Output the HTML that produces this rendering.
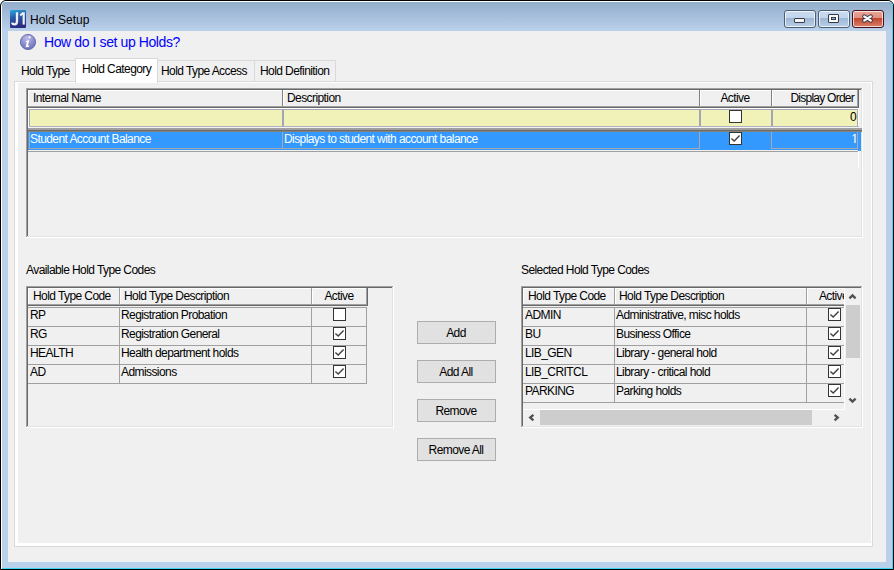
<!DOCTYPE html><html><head><meta charset="utf-8"><style>
html,body{margin:0;padding:0;width:894px;height:570px;overflow:hidden;background:#fff}
.a{position:absolute}
.t{font-family:"Liberation Sans",sans-serif;font-size:12px;line-height:14px;white-space:nowrap;color:#000}
</style></head><body>
<div class="a" style="left:0px;top:0px;width:894px;height:570px;box-sizing:border-box;border:1px solid #000;border-radius:6px 6px 0 0;background:#000"></div>
<div class="a" style="left:1px;top:1px;width:892px;height:568px;border-radius:5px 5px 0 0;background:#fff"></div>
<div class="a" style="left:2px;top:2px;width:891px;height:567px;border-radius:4px 4px 0 0;background:#3ed6f6"></div>
<div class="a" style="left:2px;top:2px;width:890px;height:566px;border-radius:4px 4px 0 0;background:linear-gradient(#93aeca 0px,#a6bedb 14px,#b9d1ea 29px,#b9d1ea 100%)"></div>
<div class="a" style="left:8px;top:31px;width:878px;height:531px;background:#f0f0f0"></div>
<svg class="a" style="left:10px;top:10px" width="16" height="18"><defs><linearGradient id="jg" x1="0" y1="0" x2="0.25" y2="1"><stop offset="0" stop-color="#27aae6"/><stop offset="0.45" stop-color="#2a5aa4"/><stop offset="1" stop-color="#2e2c82"/></linearGradient></defs><rect x="0" y="0" width="16" height="18" rx="1" fill="url(#jg)"/><path d="M7 2.2 L7 11 Q7 14.4 4.4 14.4 Q2.6 14.4 2 12.6" stroke="#eef0f8" stroke-width="2.3" fill="none"/><path d="M13.7 2.3 L13.7 14.6" stroke="#eef0f8" stroke-width="2.2" fill="none"/><path d="M13.4 2.8 L10.2 5.4" stroke="#eef0f8" stroke-width="2" fill="none"/></svg>
<div class="a t" style="left:30px;top:13px;font-size:12px;letter-spacing:0px;color:#000">Hold Setup</div>
<div class="a" style="left:784px;top:10px;width:32px;height:18px;box-sizing:border-box;border:1px solid #4f5d73;border-radius:3px;background:linear-gradient(#c9dbef 0,#c2d5eb 7px,#9cb6d3 7px,#b9cfe8 100%);box-shadow:inset 0 0 0 1px rgba(255,255,255,.7)"></div>
<div class="a" style="left:818px;top:10px;width:32px;height:18px;box-sizing:border-box;border:1px solid #4f5d73;border-radius:3px;background:linear-gradient(#c9dbef 0,#c2d5eb 7px,#9cb6d3 7px,#b9cfe8 100%);box-shadow:inset 0 0 0 1px rgba(255,255,255,.7)"></div>
<div class="a" style="left:852px;top:10px;width:32px;height:18px;box-sizing:border-box;border:1px solid #4a0f1a;border-radius:3px;background:linear-gradient(#e9a595 0,#e0917f 7px,#c2432a 7px,#d9806a 100%);box-shadow:inset 0 0 0 1px rgba(255,255,255,.7)"></div>
<div class="a" style="left:794px;top:18px;width:11px;height:5px;box-sizing:border-box;border:1px solid #343c4c;border-radius:1px;background:#f4f4f4"></div>
<div class="a" style="left:828px;top:14px;width:11px;height:9px;box-sizing:border-box;border:1px solid #343c4c;border-radius:1px;background:#f8f8f8"></div>
<div class="a" style="left:831px;top:17px;width:5px;height:3px;box-sizing:border-box;border:1px solid #343c4c;background:#9bb2cf"></div>
<svg class="a" style="left:860px;top:13px" width="15" height="11"><path d="M4.3 3.4 L10.7 7.6 M10.7 3.4 L4.3 7.6" stroke="#2d3444" stroke-width="4.2" stroke-linecap="round"/><path d="M4.3 3.4 L10.7 7.6 M10.7 3.4 L4.3 7.6" stroke="#f6f6f6" stroke-width="2.4" stroke-linecap="round"/></svg>
<svg class="a" style="left:20px;top:34px" width="16" height="16"><defs><radialGradient id="ig" cx="45%" cy="25%" r="75%"><stop offset="0" stop-color="#c4bdea"/><stop offset="0.6" stop-color="#8a8ccc"/><stop offset="1" stop-color="#6a70b8"/></radialGradient></defs><circle cx="8" cy="8" r="7.6" fill="url(#ig)" stroke="#5f66ad" stroke-width="0.9"/><circle cx="9.6" cy="3.3" r="1.15" fill="#fff"/><path d="M6.1 6.9 L9.3 6.1 L7.8 11.8 L9.4 11.5 L8.9 13.1 L5.5 13.2 L6.9 8.1 L5.8 8.2 Z" fill="#fff"/></svg>
<div class="a t" style="left:44px;top:35px;font-size:14px;letter-spacing:-0.4px;color:#0000ff">How do I set up Holds?</div>
<div class="a" style="left:14px;top:81px;width:859px;height:466px;box-sizing:border-box;border:1px solid #d9d9d9;background:#fff"></div>
<div class="a" style="left:18px;top:83px;width:853px;height:460px;background:#f0f0f0"></div>
<div class="a" style="left:16px;top:60px;width:60px;height:22px;box-sizing:border-box;border:1px solid #d9d9d9;background:#f0f0f0"></div>
<div class="a t" style="left:21px;top:64px;font-size:12px;letter-spacing:-0.58px;">Hold Type</div>
<div class="a" style="left:16px;top:61px;width:1px;height:20px;background:#f0f0f0"></div>
<div class="a" style="left:157px;top:60px;width:98px;height:22px;box-sizing:border-box;border:1px solid #d9d9d9;background:#f0f0f0"></div>
<div class="a t" style="left:161px;top:64px;font-size:12px;letter-spacing:-0.58px;">Hold Type Access</div>
<div class="a" style="left:254px;top:60px;width:82px;height:22px;box-sizing:border-box;border:1px solid #d9d9d9;background:#f0f0f0"></div>
<div class="a t" style="left:260px;top:64px;font-size:12px;letter-spacing:-0.58px;">Hold Definition</div>
<div class="a" style="left:75px;top:58px;width:83px;height:25px;box-sizing:border-box;border:1px solid #d9d9d9;border-bottom:none;background:#fff"></div>
<div class="a t" style="left:82px;top:62px;font-size:12px;letter-spacing:-0.58px;">Hold Category</div>
<div class="a" style="left:26px;top:88px;width:837px;height:150px;background:#f0f0f0"></div>
<div class="a" style="left:26px;top:88px;width:836px;height:1px;background:#a0a0a0"></div>
<div class="a" style="left:26px;top:88px;width:1px;height:149px;background:#a0a0a0"></div>
<div class="a" style="left:27px;top:89px;width:834px;height:1px;background:#696969"></div>
<div class="a" style="left:27px;top:89px;width:1px;height:147px;background:#696969"></div>
<div class="a" style="left:27px;top:236px;width:835px;height:1px;background:#e3e3e3"></div>
<div class="a" style="left:861px;top:89px;width:1px;height:148px;background:#e3e3e3"></div>
<div class="a" style="left:26px;top:237px;width:837px;height:1px;background:#fff"></div>
<div class="a" style="left:862px;top:88px;width:1px;height:150px;background:#fff"></div>
<div class="a" style="left:28px;top:90px;width:255px;height:18px;background:#f0f0f0"></div>
<div class="a" style="left:28px;top:90px;width:254px;height:1px;background:#fff"></div>
<div class="a" style="left:28px;top:90px;width:1px;height:16px;background:#fff"></div>
<div class="a" style="left:282px;top:90px;width:1px;height:18px;background:#808080"></div>
<div class="a" style="left:283px;top:90px;width:417px;height:18px;background:#f0f0f0"></div>
<div class="a" style="left:283px;top:90px;width:416px;height:1px;background:#fff"></div>
<div class="a" style="left:283px;top:90px;width:1px;height:16px;background:#fff"></div>
<div class="a" style="left:699px;top:90px;width:1px;height:18px;background:#808080"></div>
<div class="a" style="left:700px;top:90px;width:72px;height:18px;background:#f0f0f0"></div>
<div class="a" style="left:700px;top:90px;width:71px;height:1px;background:#fff"></div>
<div class="a" style="left:700px;top:90px;width:1px;height:16px;background:#fff"></div>
<div class="a" style="left:771px;top:90px;width:1px;height:18px;background:#808080"></div>
<div class="a" style="left:772px;top:90px;width:87px;height:18px;background:#f0f0f0"></div>
<div class="a" style="left:772px;top:90px;width:86px;height:1px;background:#fff"></div>
<div class="a" style="left:772px;top:90px;width:1px;height:16px;background:#fff"></div>
<div class="a" style="left:858px;top:90px;width:1px;height:18px;background:#808080"></div>
<div class="a" style="left:28px;top:106px;width:831px;height:1px;background:#a0a0a0"></div>
<div class="a" style="left:28px;top:107px;width:831px;height:1px;background:#696969"></div>
<div class="a" style="left:857px;top:90px;width:1px;height:17px;background:#a0a0a0"></div>
<div class="a" style="left:858px;top:89px;width:1px;height:19px;background:#696969"></div>
<div class="a t" style="left:33px;top:91px;font-size:12px;letter-spacing:-0.58px;">Internal Name</div>
<div class="a t" style="left:287px;top:91px;font-size:12px;letter-spacing:-0.58px;">Description</div>
<div class="a t" style="left:635px;width:200px;text-align:center;top:91px;font-size:12px;letter-spacing:-0.58px;">Active</div>
<div class="a t" style="right:40px;top:91px;font-size:12px;letter-spacing:-0.75px;">Display Order</div>
<div class="a" style="left:28px;top:108px;width:831px;height:1px;background:#fff"></div>
<div class="a" style="left:28px;top:108px;width:1px;height:20px;background:#fff"></div>
<div class="a" style="left:29px;top:109px;width:830px;height:17px;background:#f0f2b8"></div>
<div class="a" style="left:29px;top:109px;width:830px;height:1px;background:#a8a8b8"></div>
<div class="a" style="left:29px;top:109px;width:1px;height:17px;background:#a8a8b8"></div>
<div class="a" style="left:282px;top:109px;width:2px;height:17px;background:#a4a4b4"></div>
<div class="a" style="left:699px;top:109px;width:2px;height:17px;background:#a4a4b4"></div>
<div class="a" style="left:771px;top:109px;width:2px;height:17px;background:#a4a4b4"></div>
<div class="a" style="left:857px;top:109px;width:1px;height:17px;background:#a8a8b8"></div>
<div class="a" style="left:858px;top:108px;width:3px;height:20px;background:#f0f0f0"></div>
<div class="a" style="left:858px;top:108px;width:1px;height:20px;background:#fff"></div>
<div class="a" style="left:29px;top:126px;width:830px;height:1px;background:#b0b0c0"></div>
<div class="a" style="left:28px;top:127px;width:831px;height:1px;background:#f4f4f4"></div>
<div class="a" style="left:28px;top:128px;width:834px;height:1px;background:#a0a0a0"></div>
<div class="a" style="left:28px;top:129px;width:834px;height:1px;background:#a0a0a0"></div>
<div class="a" style="left:28px;top:130px;width:834px;height:1px;background:#6a6a6a"></div>
<div class="a" style="left:28px;top:131px;width:834px;height:1px;background:#8a8478"></div>
<div class="a" style="left:729px;top:110px;width:11px;height:11px;border:1px solid #333;background:#fff"></div>
<div class="a t" style="right:38px;top:110px;font-size:12px;letter-spacing:-0.58px;">0</div>
<div class="a" style="left:28px;top:132px;width:833px;height:19px;background:#3399ff"></div>
<div class="a" style="left:29px;top:148px;width:670px;height:1px;background:#a8a8b0"></div>
<div class="a" style="left:772px;top:148px;width:86px;height:1px;background:#a8a8b0"></div>
<div class="a" style="left:29px;top:132px;width:1px;height:17px;background:#a8a8b0"></div>
<div class="a" style="left:282px;top:132px;width:1px;height:17px;background:#a8a8b0"></div>
<div class="a" style="left:699px;top:132px;width:1px;height:17px;background:#a8a8b0"></div>
<div class="a" style="left:771px;top:132px;width:1px;height:17px;background:#a8a8b0"></div>
<div class="a" style="left:857px;top:132px;width:1px;height:17px;background:#a8a8b0"></div>
<div class="a" style="left:28px;top:150px;width:830px;height:1px;background:#f2eee8"></div>
<div class="a" style="left:28px;top:151px;width:830px;height:1px;background:#a0a0a0"></div>
<div class="a" style="left:858px;top:151px;width:1px;height:17px;background:#fff"></div>
<div class="a t" style="left:30px;top:132px;font-size:12px;letter-spacing:-0.58px;color:#fff">Student Account Balance</div>
<div class="a t" style="left:284px;top:132px;font-size:12px;letter-spacing:-0.58px;color:#fff">Displays to student with account balance</div>
<div class="a" style="left:729px;top:132px;width:11px;height:11px;border:1px solid #333;background:#fff"><svg width="11" height="11" style="position:absolute;left:0;top:0"><path d="M1.4 5.4 L4.2 8 L9.6 2.4" stroke="#404040" stroke-width="1.4" fill="none"/></svg></div>
<svg class="a" style="left:850px;top:133px" width="8" height="11"><path d="M5 1 L5 10" stroke="#fff" stroke-width="1.3"/><path d="M4.8 1.3 L2.6 3" stroke="#fff" stroke-width="1"/></svg>
<div class="a t" style="left:26px;top:263px;font-size:12px;letter-spacing:-0.58px;">Available Hold Type Codes</div>
<div class="a t" style="left:521px;top:263px;font-size:12px;letter-spacing:-0.58px;">Selected Hold Type Codes</div>
<div class="a" style="left:26px;top:286px;width:368px;height:142px;background:#f0f0f0"></div>
<div class="a" style="left:26px;top:286px;width:367px;height:1px;background:#a0a0a0"></div>
<div class="a" style="left:26px;top:286px;width:1px;height:141px;background:#a0a0a0"></div>
<div class="a" style="left:27px;top:287px;width:366px;height:1px;background:#696969"></div>
<div class="a" style="left:27px;top:287px;width:1px;height:139px;background:#696969"></div>
<div class="a" style="left:27px;top:426px;width:367px;height:1px;background:#e3e3e3"></div>
<div class="a" style="left:392px;top:287px;width:1px;height:140px;background:#e3e3e3"></div>
<div class="a" style="left:26px;top:427px;width:368px;height:1px;background:#fff"></div>
<div class="a" style="left:393px;top:286px;width:1px;height:142px;background:#fff"></div>
<div class="a" style="left:28px;top:288px;width:92px;height:1px;background:#fff"></div>
<div class="a" style="left:28px;top:288px;width:1px;height:16px;background:#fff"></div>
<div class="a" style="left:119px;top:288px;width:1px;height:16px;background:#a0a0a0"></div>
<div class="a" style="left:120px;top:288px;width:192px;height:1px;background:#fff"></div>
<div class="a" style="left:120px;top:288px;width:1px;height:16px;background:#fff"></div>
<div class="a" style="left:311px;top:288px;width:1px;height:16px;background:#a0a0a0"></div>
<div class="a" style="left:312px;top:288px;width:56px;height:1px;background:#fff"></div>
<div class="a" style="left:312px;top:288px;width:1px;height:16px;background:#fff"></div>
<div class="a" style="left:367px;top:288px;width:1px;height:16px;background:#a0a0a0"></div>
<div class="a" style="left:28px;top:304px;width:340px;height:1px;background:#a0a0a0"></div>
<div class="a" style="left:28px;top:305px;width:340px;height:1px;background:#696969"></div>
<div class="a" style="left:28px;top:307px;width:339px;height:1px;background:#a0a0a0"></div>
<div class="a" style="left:28px;top:326px;width:339px;height:1px;background:#a0a0a0"></div>
<div class="a" style="left:28px;top:345px;width:339px;height:1px;background:#a0a0a0"></div>
<div class="a" style="left:28px;top:364px;width:339px;height:1px;background:#a0a0a0"></div>
<div class="a" style="left:28px;top:383px;width:339px;height:1px;background:#a0a0a0"></div>
<div class="a" style="left:119px;top:307px;width:1px;height:76px;background:#a0a0a0"></div>
<div class="a" style="left:311px;top:307px;width:1px;height:76px;background:#a0a0a0"></div>
<div class="a" style="left:366px;top:307px;width:1px;height:77px;background:#a0a0a0"></div>
<div class="a" style="left:366px;top:288px;width:1px;height:17px;background:#a0a0a0"></div>
<div class="a" style="left:367px;top:288px;width:1px;height:18px;background:#696969"></div>
<div class="a t" style="left:33px;top:289px;font-size:12px;letter-spacing:-0.58px;">Hold Type Code</div>
<div class="a t" style="left:124px;top:289px;font-size:12px;letter-spacing:-0.58px;">Hold Type Description</div>
<div class="a t" style="left:239px;width:200px;text-align:center;top:289px;font-size:12px;letter-spacing:-0.58px;">Active</div>
<div class="a t" style="left:30px;top:308px;font-size:12px;letter-spacing:-0.58px;">RP</div>
<div class="a t" style="left:121px;top:308px;font-size:12px;letter-spacing:-0.58px;">Registration Probation</div>
<div class="a" style="left:333px;top:308px;width:11px;height:11px;border:1px solid #333;background:#fff"></div>
<div class="a t" style="left:30px;top:327px;font-size:12px;letter-spacing:-0.58px;">RG</div>
<div class="a t" style="left:121px;top:327px;font-size:12px;letter-spacing:-0.58px;">Registration General</div>
<div class="a" style="left:333px;top:327px;width:11px;height:11px;border:1px solid #333;background:#fff"><svg width="11" height="11" style="position:absolute;left:0;top:0"><path d="M1.4 5.4 L4.2 8 L9.6 2.4" stroke="#404040" stroke-width="1.4" fill="none"/></svg></div>
<div class="a t" style="left:30px;top:346px;font-size:12px;letter-spacing:-0.58px;">HEALTH</div>
<div class="a t" style="left:121px;top:346px;font-size:12px;letter-spacing:-0.58px;">Health department holds</div>
<div class="a" style="left:333px;top:346px;width:11px;height:11px;border:1px solid #333;background:#fff"><svg width="11" height="11" style="position:absolute;left:0;top:0"><path d="M1.4 5.4 L4.2 8 L9.6 2.4" stroke="#404040" stroke-width="1.4" fill="none"/></svg></div>
<div class="a t" style="left:30px;top:365px;font-size:12px;letter-spacing:-0.58px;">AD</div>
<div class="a t" style="left:121px;top:365px;font-size:12px;letter-spacing:-0.58px;">Admissions</div>
<div class="a" style="left:333px;top:365px;width:11px;height:11px;border:1px solid #333;background:#fff"><svg width="11" height="11" style="position:absolute;left:0;top:0"><path d="M1.4 5.4 L4.2 8 L9.6 2.4" stroke="#404040" stroke-width="1.4" fill="none"/></svg></div>
<div class="a" style="left:521px;top:286px;width:342px;height:142px;background:#f0f0f0"></div>
<div class="a" style="left:521px;top:286px;width:341px;height:1px;background:#a0a0a0"></div>
<div class="a" style="left:521px;top:286px;width:1px;height:141px;background:#a0a0a0"></div>
<div class="a" style="left:522px;top:287px;width:340px;height:1px;background:#696969"></div>
<div class="a" style="left:522px;top:287px;width:1px;height:139px;background:#696969"></div>
<div class="a" style="left:522px;top:426px;width:341px;height:1px;background:#e3e3e3"></div>
<div class="a" style="left:861px;top:287px;width:1px;height:140px;background:#e3e3e3"></div>
<div class="a" style="left:521px;top:427px;width:342px;height:1px;background:#fff"></div>
<div class="a" style="left:862px;top:286px;width:1px;height:142px;background:#fff"></div>
<div class="a" style="left:523px;top:288px;width:92px;height:1px;background:#fff"></div>
<div class="a" style="left:523px;top:288px;width:1px;height:16px;background:#fff"></div>
<div class="a" style="left:614px;top:288px;width:1px;height:16px;background:#a0a0a0"></div>
<div class="a" style="left:615px;top:288px;width:192px;height:1px;background:#fff"></div>
<div class="a" style="left:615px;top:288px;width:1px;height:16px;background:#fff"></div>
<div class="a" style="left:806px;top:288px;width:1px;height:16px;background:#a0a0a0"></div>
<div class="a" style="left:807px;top:288px;width:38px;height:1px;background:#fff"></div>
<div class="a" style="left:807px;top:288px;width:1px;height:16px;background:#fff"></div>
<div class="a" style="left:523px;top:304px;width:322px;height:1px;background:#a0a0a0"></div>
<div class="a" style="left:523px;top:305px;width:322px;height:1px;background:#696969"></div>
<div class="a" style="left:523px;top:307px;width:322px;height:1px;background:#a0a0a0"></div>
<div class="a" style="left:523px;top:326px;width:322px;height:1px;background:#a0a0a0"></div>
<div class="a" style="left:523px;top:345px;width:322px;height:1px;background:#a0a0a0"></div>
<div class="a" style="left:523px;top:364px;width:322px;height:1px;background:#a0a0a0"></div>
<div class="a" style="left:523px;top:383px;width:322px;height:1px;background:#a0a0a0"></div>
<div class="a" style="left:523px;top:402px;width:322px;height:1px;background:#a0a0a0"></div>
<div class="a" style="left:614px;top:307px;width:1px;height:95px;background:#a0a0a0"></div>
<div class="a" style="left:806px;top:307px;width:1px;height:95px;background:#a0a0a0"></div>
<div class="a t" style="left:528px;top:289px;font-size:12px;letter-spacing:-0.58px;">Hold Type Code</div>
<div class="a t" style="left:619px;top:289px;font-size:12px;letter-spacing:-0.58px;">Hold Type Description</div>
<div class="a" style="left:807px;top:288px;width:38px;height:16px;overflow:hidden"><div class="a t" style="left:-2px;width:57px;text-align:center;top:1px;letter-spacing:-0.58px">Active</div></div>
<div class="a t" style="left:525px;top:308px;font-size:12px;letter-spacing:-0.58px;">ADMIN</div>
<div class="a t" style="left:616px;top:308px;font-size:12px;letter-spacing:-0.58px;">Administrative, misc holds</div>
<div class="a" style="left:828px;top:308px;width:11px;height:11px;border:1px solid #333;background:#fff"><svg width="11" height="11" style="position:absolute;left:0;top:0"><path d="M1.4 5.4 L4.2 8 L9.6 2.4" stroke="#404040" stroke-width="1.4" fill="none"/></svg></div>
<div class="a t" style="left:525px;top:327px;font-size:12px;letter-spacing:-0.58px;">BU</div>
<div class="a t" style="left:616px;top:327px;font-size:12px;letter-spacing:-0.58px;">Business Office</div>
<div class="a" style="left:828px;top:327px;width:11px;height:11px;border:1px solid #333;background:#fff"><svg width="11" height="11" style="position:absolute;left:0;top:0"><path d="M1.4 5.4 L4.2 8 L9.6 2.4" stroke="#404040" stroke-width="1.4" fill="none"/></svg></div>
<div class="a t" style="left:525px;top:346px;font-size:12px;letter-spacing:-0.58px;">LIB_GEN</div>
<div class="a t" style="left:616px;top:346px;font-size:12px;letter-spacing:-0.58px;">Library - general hold</div>
<div class="a" style="left:828px;top:346px;width:11px;height:11px;border:1px solid #333;background:#fff"><svg width="11" height="11" style="position:absolute;left:0;top:0"><path d="M1.4 5.4 L4.2 8 L9.6 2.4" stroke="#404040" stroke-width="1.4" fill="none"/></svg></div>
<div class="a t" style="left:525px;top:365px;font-size:12px;letter-spacing:-0.58px;">LIB_CRITCL</div>
<div class="a t" style="left:616px;top:365px;font-size:12px;letter-spacing:-0.58px;">Library - critical hold</div>
<div class="a" style="left:828px;top:365px;width:11px;height:11px;border:1px solid #333;background:#fff"><svg width="11" height="11" style="position:absolute;left:0;top:0"><path d="M1.4 5.4 L4.2 8 L9.6 2.4" stroke="#404040" stroke-width="1.4" fill="none"/></svg></div>
<div class="a t" style="left:525px;top:384px;font-size:12px;letter-spacing:-0.58px;">PARKING</div>
<div class="a t" style="left:616px;top:384px;font-size:12px;letter-spacing:-0.58px;">Parking holds</div>
<div class="a" style="left:828px;top:384px;width:11px;height:11px;border:1px solid #333;background:#fff"><svg width="11" height="11" style="position:absolute;left:0;top:0"><path d="M1.4 5.4 L4.2 8 L9.6 2.4" stroke="#404040" stroke-width="1.4" fill="none"/></svg></div>
<div class="a" style="left:845px;top:288px;width:15px;height:121px;background:#f0f0f0"></div>
<div class="a" style="left:846px;top:305px;width:14px;height:53px;background:#cdcdcd"></div>
<svg class="a" style="left:847px;top:292px" width="11" height="9"><path d="M2.4 6.4 L5.5 3.4 L8.6 6.4" stroke="#505050" stroke-width="2.3" fill="none"/></svg>
<svg class="a" style="left:847px;top:396px" width="11" height="9"><path d="M2.4 2.6 L5.5 5.6 L8.6 2.6" stroke="#505050" stroke-width="2.3" fill="none"/></svg>
<div class="a" style="left:523px;top:409px;width:322px;height:16px;background:#f0f0f0"></div>
<div class="a" style="left:523px;top:409px;width:322px;height:1px;background:#fff"></div>
<div class="a" style="left:844px;top:288px;width:1px;height:121px;background:#fff"></div>
<div class="a" style="left:540px;top:410px;width:272px;height:15px;background:#cdcdcd"></div>
<svg class="a" style="left:527px;top:412px" width="9" height="11"><path d="M6.4 2.8 L3.2 5.6 L6.4 8.4" stroke="#505050" stroke-width="2.3" fill="none"/></svg>
<svg class="a" style="left:832px;top:412px" width="9" height="11"><path d="M2.6 2.8 L5.8 5.6 L2.6 8.4" stroke="#505050" stroke-width="2.3" fill="none"/></svg>
<div class="a" style="left:417px;top:321px;width:79px;height:23px;box-sizing:border-box;border:1px solid #adadad;background:#e1e1e1"></div>
<div class="a t" style="left:356px;width:200px;text-align:center;top:326px;font-size:12px;letter-spacing:-0.58px;">Add</div>
<div class="a" style="left:417px;top:360px;width:79px;height:23px;box-sizing:border-box;border:1px solid #adadad;background:#e1e1e1"></div>
<div class="a t" style="left:356px;width:200px;text-align:center;top:365px;font-size:12px;letter-spacing:-0.58px;">Add All</div>
<div class="a" style="left:417px;top:399px;width:79px;height:23px;box-sizing:border-box;border:1px solid #adadad;background:#e1e1e1"></div>
<div class="a t" style="left:356px;width:200px;text-align:center;top:404px;font-size:12px;letter-spacing:-0.58px;">Remove</div>
<div class="a" style="left:417px;top:438px;width:79px;height:23px;box-sizing:border-box;border:1px solid #adadad;background:#e1e1e1"></div>
<div class="a t" style="left:356px;width:200px;text-align:center;top:443px;font-size:12px;letter-spacing:-0.58px;">Remove All</div>
</body></html>
